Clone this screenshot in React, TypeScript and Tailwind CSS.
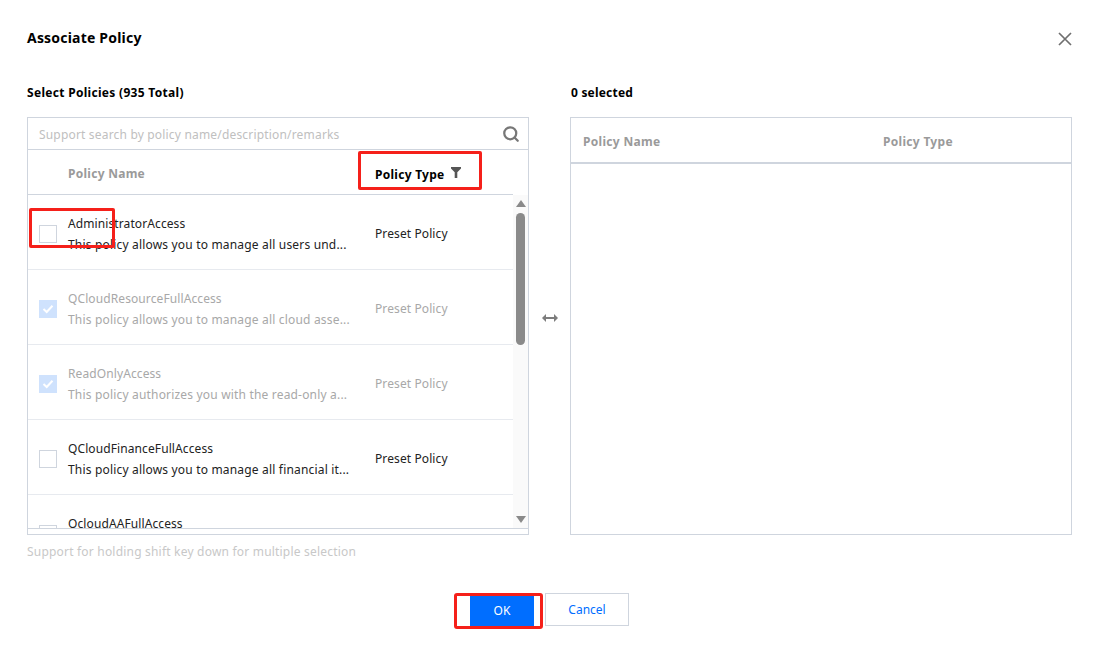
import { Search } from "lucide-react";

interface Policy {
  name: string;
  description?: string;
  disabled?: boolean;
}

const policies: Policy[] = [
  {
    name: "AdministratorAccess",
    description: "This policy allows you to manage all users und...",
  },
  {
    name: "QCloudResourceFullAccess",
    description: "This policy allows you to manage all cloud asse...",
    disabled: true,
  },
  {
    name: "ReadOnlyAccess",
    description: "This policy authorizes you with the read-only a...",
    disabled: true,
  },
  {
    name: "QCloudFinanceFullAccess",
    description: "This policy allows you to manage all financial it...",
  },
  // cut off by the bottom of the list
  {
    name: "QcloudAAFullAccess",
  },
];

function Checkbox({ checked }: { checked?: boolean }) {
  if (checked) {
    return (
      <span className="mt-[4px] flex h-[18px] w-[18px] shrink-0 items-center justify-center bg-[#cfe2fd]">
        <svg width="12" height="10" viewBox="0 0 12 10" fill="none">
          <path d="M1.5 5l3.2 3L10.5 1.8" stroke="#fff" strokeWidth="2" />
        </svg>
      </span>
    );
  }
  return <span className="mt-[4px] h-[18px] w-[18px] shrink-0 border border-[#cfd5de] bg-white" />;
}

function PolicyRow({ policy }: { policy: Policy }) {
  const tone = policy.disabled ? "text-[#a8a8a8]" : "text-[#222222]";
  return (
    <div className={`flex h-[75px] shrink-0 items-center border-b border-[#e7eaef] pl-[11px] tracking-[0.1px] ${tone}`}>
      <Checkbox checked={policy.disabled} />
      <div className="ml-[11px] w-[307px] shrink-0 pt-[3px]">
        <div className="h-[21px] leading-[21px] whitespace-nowrap">{policy.name}</div>
        <div className="h-[21px] leading-[21px] tracking-[0.18px] whitespace-nowrap">{policy.description}</div>
      </div>
      {policy.description && <div className="pt-[3px]">Preset Policy</div>}
    </div>
  );
}

export default function App() {
  return (
    <div className="relative h-[653px] w-[1099px] overflow-hidden bg-white px-[27px] font-['Noto_Sans','Open_Sans',sans-serif] text-[12px] text-[#222222]">
      <div className="flex h-[78px] items-start justify-between pt-[27px]">
        <h1 className="text-[14px] leading-[21px] font-bold tracking-[0.2px] text-black">Associate Policy</h1>
        <svg className="mt-[5px]" width="14" height="14" viewBox="0 0 14 14" fill="none" stroke="#6f6f6f" strokeWidth="1.7">
          <path d="M1 1l12 12M13 1L1 13" />
        </svg>
      </div>

      <div className="flex">
        <div className="w-[502px]">
          <div className="h-[28px] pt-[6px] leading-[18px] font-bold tracking-[0.3px] text-black">Select Policies (935 Total)</div>
          <div className="mt-[11px] h-[418px] border border-[#cfd5de]">
            <div className="flex h-[32px] items-center justify-between border-b border-[#cfd5de] pr-[8px] pl-[11px]">
              <span className="pt-[2px] tracking-[0.18px] text-[#c0c0c0]">Support search by policy name/description/remarks</span>
              <Search className="text-[#777777]" size={18} strokeWidth={3} />
            </div>
            <div className="flex h-[45px] w-[485px] items-center border-b border-[#cfd5de] pl-[40px] font-bold tracking-[0.27px]">
              <span className="w-[307px] pt-[3px] text-[#9a9a9a]">Policy Name</span>
              <span className="flex items-center gap-[6px] pt-[5px] text-black">
                Policy Type
                <svg className="mb-[5px]" width="10" height="11" viewBox="0 0 10 11" fill="#555555">
                  <path d="M0 0h10v1.6L6.3 5.2V11H3.7V5.2L0 1.6z" />
                </svg>
              </span>
            </div>
            <div className="relative h-[334px] overflow-hidden border-b border-[#cfd5de]">
              <div className="flex w-[485px] flex-col">
                {policies.map((policy) => (
                  <PolicyRow key={policy.name} policy={policy} />
                ))}
              </div>
              <div className="absolute top-0 right-0 flex h-full w-[15px] flex-col items-center bg-[#fafafa]">
                <span className="mt-[5px] h-0 w-0 border-x-[5px] border-b-[7px] border-x-transparent border-b-[#8a8a8a]" />
                <span className="mt-[6px] h-[132px] w-[9px] rounded-[5px] bg-[#8a8a8a]" />
                <span className="mt-auto mb-[5px] h-0 w-0 border-x-[5px] border-t-[7px] border-x-transparent border-t-[#8a8a8a]" />
              </div>
            </div>
          </div>
          <div className="mt-[7px] pt-[1px] leading-[18px] tracking-[0.2px] text-[#c8c8c8]">Support for holding shift key down for multiple selection</div>
        </div>

        <div className="flex w-[41px] items-center justify-center pb-[4px]">
          <svg width="16" height="8" viewBox="0 0 16 8" fill="#7d7d7d">
            <path d="M0 4l4-4v3h8V0l4 4-4 4V5H4v3z" />
          </svg>
        </div>

        <div className="w-[502px]">
          <div className="h-[28px] pt-[6px] pl-[1px] leading-[18px] font-bold tracking-[0.2px] text-black">0 selected</div>
          <div className="mt-[11px] h-[418px] border border-[#cfd5de]">
            <div className="flex h-[46px] items-center border-b-2 border-[#cfd5de] pt-[3px] pl-[12px] font-bold tracking-[0.3px] text-[#9a9a9a]">
              <span className="w-[300px]">Policy Name</span>
              <span>Policy Type</span>
            </div>
          </div>
        </div>
      </div>

      <div className="mt-[32px] flex justify-center">
        <div className="mt-[3px] flex h-[30px] w-[64px] items-center justify-center bg-[#006eff] pb-[1px] text-white">OK</div>
        <div className="ml-[11px] flex h-[33px] w-[84px] items-center justify-center border border-[#cfd5de] text-[#006eff]">Cancel</div>
      </div>

      {/* red annotations from the original screenshot */}
      <div className="absolute top-[151px] left-[358px] h-[39px] w-[124px] rounded-[2px] border-[3px] border-[#f5201a]" />
      <div className="absolute top-[208px] left-[29px] h-[40px] w-[86px] rounded-[2px] border-[3px] border-[#f5201a]" />
      <div className="absolute top-[593px] left-[454px] h-[36px] w-[89px] rounded-[3px] border-[3px] border-[#f5201a]" />
    </div>
  );
}
